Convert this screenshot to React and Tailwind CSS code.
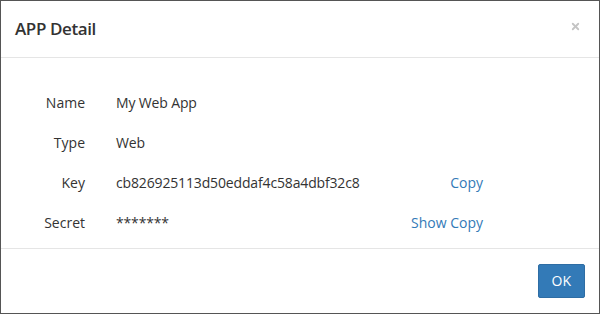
import { X } from 'lucide-react';

const rows = [
  { label: 'Name', value: 'My Web App' },
  { label: 'Type', value: 'Web' },
  { label: 'Key', value: 'cb826925113d50eddaf4c58a4dbf32c8', action: 'Copy' },
  { label: 'Secret', value: '*******', action: 'Show Copy' },
];

export default function App() {
  return (
    <div
      className="w-[600px] h-[314px] bg-white border border-[#555] flex flex-col text-[#333] text-[14px] leading-5"
      style={{ fontFamily: '"Open Sans", "Noto Sans", sans-serif' }}
    >
      {/* header */}
      <div className="h-[57px] px-[14px] flex items-center justify-between border-b border-[#e5e5e5]">
        <h4 className="text-[17px] font-semibold leading-[26px] tracking-[-0.4px]">APP Detail</h4>
        <button className="text-[#c4c4c4] mr-[4px] mt-[-5px]">
          <X className="w-[11px] h-[11px]" strokeWidth={4} />
        </button>
      </div>

      {/* body */}
      <div className="h-[190px] pt-[25px]">
        {rows.map((row) => (
          <div key={row.label} className="h-10 flex items-center">
            <div className="w-[84px] text-right">{row.label}</div>
            <div className="ml-[31px] flex-1 tracking-[-0.15px]">{row.value}</div>
            {row.action && (
              <a href="#" className="mr-[116px] text-[#337ab7]">
                {row.action}
              </a>
            )}
          </div>
        ))}
      </div>

      {/* footer */}
      <div className="flex-1 border-t border-[#e5e5e5] flex justify-end items-start pt-[15px] pr-[14px]">
        <button className="h-[34px] px-[13px] bg-[#337ab7] border border-[#2e6da4] text-white rounded-[2px]">
          OK
        </button>
      </div>
    </div>
  );
}
